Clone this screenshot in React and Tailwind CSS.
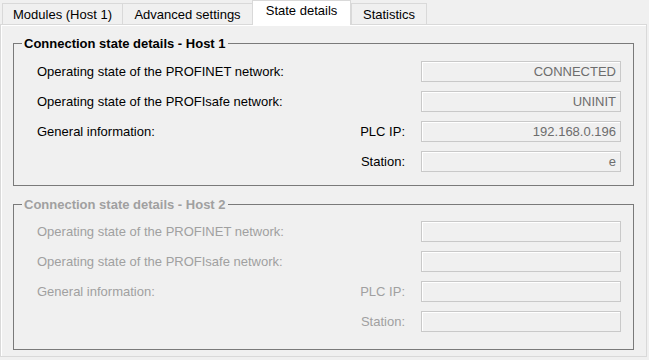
import React from 'react';

const tabs = [
  { label: 'Modules (Host 1)', width: 'w-[120px]' },
  { label: 'Advanced settings', width: 'w-[130px]' },
  { label: 'State details', width: 'w-[99px]', active: true },
  { label: 'Statistics', width: 'w-[76px]' },
];

const host1 = [
  { label: 'Operating state of the PROFINET network:', value: 'CONNECTED' },
  { label: 'Operating state of the PROFIsafe network:', value: 'UNINIT' },
  { label: 'General information:', sub: 'PLC IP:', value: '192.168.0.196' },
  { sub: 'Station:', value: 'e' },
];

const host2 = [
  { label: 'Operating state of the PROFINET network:', value: '' },
  { label: 'Operating state of the PROFIsafe network:', value: '' },
  { label: 'General information:', sub: 'PLC IP:', value: '' },
  { sub: 'Station:', value: '' },
];

function Field({ value }) {
  return (
    <div className="w-[200px] h-[21px] border border-[#c9c9c9] bg-[#f0f0f0] shadow-[inset_1px_1px_0_#ffffff] flex items-center justify-end pr-[4px] text-[#6d6d6d]">
      {value}
    </div>
  );
}

function Group({ title, rows, disabled, className, rowsTop }) {
  const text = disabled ? 'text-[#a0a0a0]' : 'text-black';
  return (
    <div className={`mx-[12px] border border-[#7a7a7a] ${className}`}>
      <div className={`-mt-[7px] ml-[8px] w-fit px-[2px] bg-[#f0f0f0] font-bold leading-[14px] ${text}`}>{title}</div>
      <div className={`flex flex-col gap-[9px] pr-[12px] ${rowsTop}`}>
        {rows.map((r, i) => (
          <div key={i} className={`flex items-center h-[21px] ${text}`}>
            <span className="flex-1 pl-[23px]">{r.label}</span>
            {r.sub && <span className="mr-[16px]">{r.sub}</span>}
            <Field value={r.value} />
          </div>
        ))}
      </div>
    </div>
  );
}

export default function App() {
  return (
    <div className="w-[649px] h-[360px] bg-[#f0f0f0] text-[13px] leading-[14px] text-black overflow-hidden" style={{ fontFamily: '"Liberation Sans", Arial, sans-serif' }}>
      <div className="flex items-end h-[24px] pl-[2px]">
        {tabs.map((t, i) =>
          t.active ? (
            <div key={i} className={`${t.width} h-[25px] -mb-px relative z-10 bg-white border border-b-0 border-[#d9d9d9] flex items-center justify-center pb-[4px]`}>
              {t.label}
            </div>
          ) : (
            <div key={i} className={`${t.width} h-[21px] border-t border-l border-[#d9d9d9] ${i === tabs.length - 1 ? 'border-r' : ''} flex items-center justify-center pt-[1px]`}>
              {t.label}
            </div>
          )
        )}
      </div>
      <div className="h-[333px] mr-[2px] border border-[#d9d9d9] shadow-[inset_1px_1px_0_#ffffff] pt-[18px]">
        <Group title="Connection state details - Host 1" rows={host1} rowsTop="mt-[10px]" className="pb-[13px]" />
        <Group title="Connection state details - Host 2" rows={host2} disabled rowsTop="mt-[9px]" className="mt-[18px] pb-[17px]" />
      </div>
    </div>
  );
}
